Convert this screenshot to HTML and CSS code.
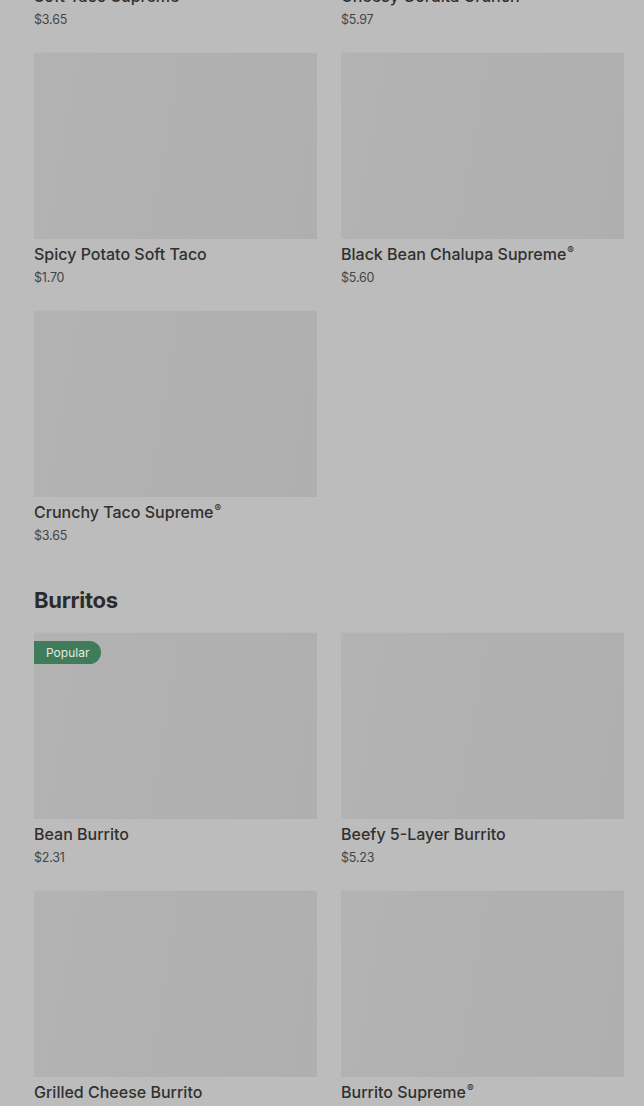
FILE: index.html
```html
<!DOCTYPE html>
<html>
<head>
<meta charset="utf-8">
<link rel="stylesheet" href="styles.css">
</head>
<body>
<main class="menu">
  <section class="section">
    <div class="grid">
      <div class="card"><div class="thumb"></div><div class="name">Soft Taco Supreme<sup>®</sup></div><div class="price">$3.65</div></div>
      <div class="card"><div class="thumb"></div><div class="name">Cheesy Gordita Crunch</div><div class="price">$5.97</div></div>
      <div class="card"><div class="thumb"></div><div class="name">Spicy Potato Soft Taco</div><div class="price">$1.70</div></div>
      <div class="card"><div class="thumb"></div><div class="name">Black Bean Chalupa Supreme<sup>®</sup></div><div class="price">$5.60</div></div>
      <div class="card"><div class="thumb"></div><div class="name">Crunchy Taco Supreme<sup>®</sup></div><div class="price">$3.65</div></div>
    </div>
  </section>
  <section class="section">
    <h2 class="heading">Burritos</h2>
    <div class="grid">
      <div class="card"><div class="thumb"><span class="badge">Popular</span></div><div class="name">Bean Burrito</div><div class="price">$2.31</div></div>
      <div class="card"><div class="thumb"></div><div class="name">Beefy 5-Layer Burrito</div><div class="price">$5.23</div></div>
      <div class="card"><div class="thumb"></div><div class="name">Grilled Cheese Burrito</div><div class="price">$4.37</div></div>
      <div class="card"><div class="thumb"></div><div class="name">Burrito Supreme<sup>®</sup></div><div class="price">$5.23</div></div>
    </div>
  </section>
</main>
</body>
</html>
```
FILE: styles.css
```css
html, body {
  margin: 0;
  padding: 0;
  background: #bcbcbc;
  overflow: hidden;
}
body {
  font-family: Inter, "Liberation Sans", sans-serif;
  color: #2f2f2f;
}
.menu {
  padding: 0 20px 0 34px;
  margin-top: -206px;
}
.section + .section {
  margin-top: 39px;
}
.heading {
  margin: 0 0 16px;
  font-size: 22px;
  line-height: 32px;
  font-weight: 700;
  letter-spacing: -0.3px;
  color: #2c2c2c;
}
.grid {
  display: grid;
  grid-template-columns: 283px 283px;
  column-gap: 24px;
  row-gap: 23px;
}
.card {
  display: flex;
  flex-direction: column;
}
.thumb {
  position: relative;
  height: 187px;
  background: linear-gradient(100deg, #b3b3b3 0%, #b1b1b1 40%, #afafaf 100%);
  border-top: 1px solid #b9b9b9;
  box-sizing: border-box;
}
.name {
  margin-top: 5px;
  font-size: 16px;
  line-height: 20px;
  font-weight: 500;
  color: #303030;
  white-space: nowrap;
}
.name sup {
  font-size: 10px;
  line-height: 0;
  vertical-align: 6px;
  margin-left: 1px;
}
.price {
  margin-top: 5px;
  font-size: 12.5px;
  line-height: 18px;
  color: #444;
  letter-spacing: -0.2px;
}
.badge {
  position: absolute;
  left: 0;
  top: 8px;
  height: 23px;
  line-height: 23px;
  padding: 0 12px;
  background: #3e7c5a;
  color: #e3e9e5;
  font-size: 12px;
  border-radius: 0 12px 12px 0;
}
```
